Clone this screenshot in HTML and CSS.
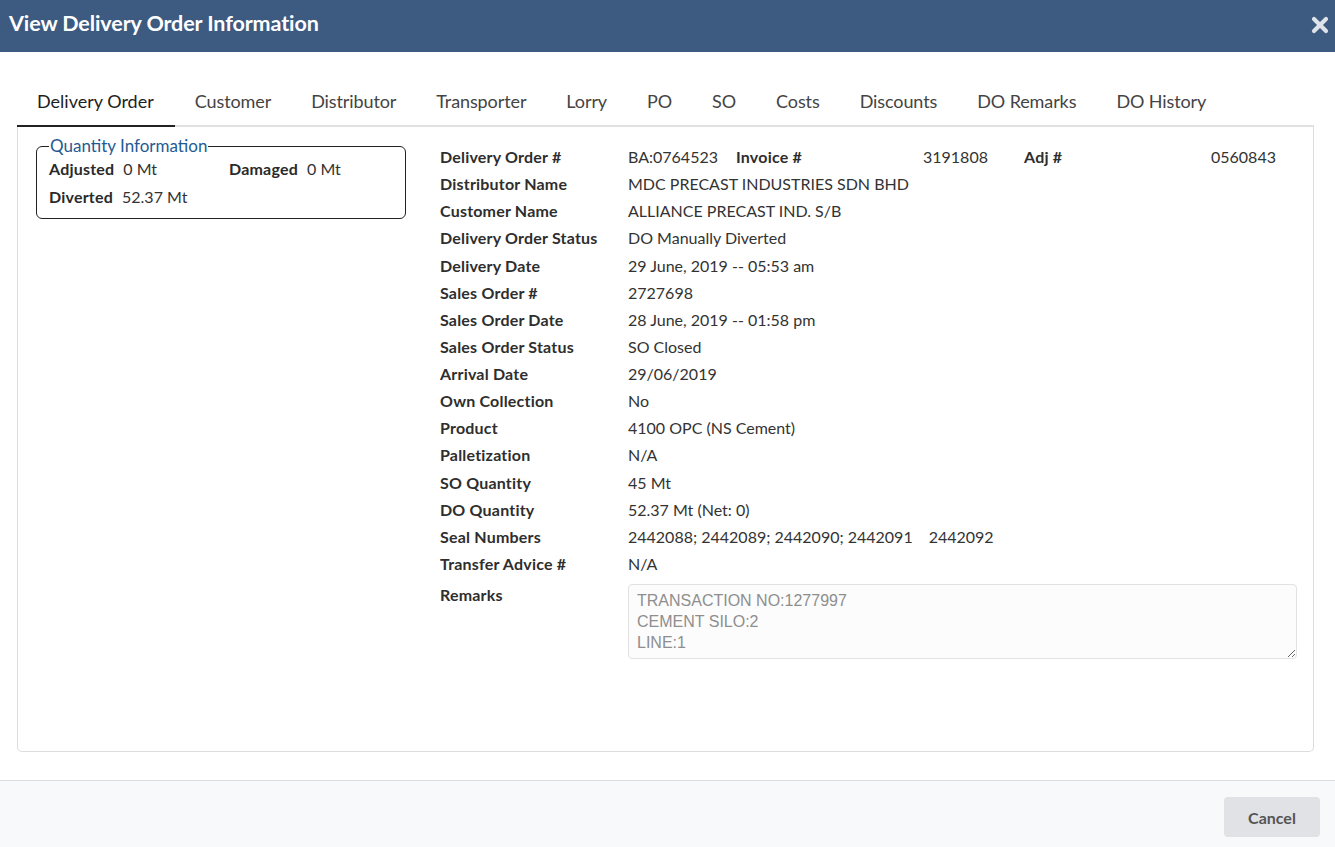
FILE: index.html
```html
<!DOCTYPE html>
<html>
<head>
<meta charset="utf-8">
<title>View Delivery Order Information</title>
<link rel="stylesheet" href="styles.css">
</head>
<body>
<div class="modal">
  <div class="modal-header">
    <h1 class="modal-title">View Delivery Order Information</h1>
    <span class="close" aria-label="Close">
      <svg width="18" height="18" viewBox="0 0 18 18"><path d="M3 3 L15 15 M15 3 L3 15" stroke="#dfe3ea" stroke-width="4.2" stroke-linecap="round"/></svg>
    </span>
  </div>
  <div class="modal-body">
    <ul class="tabs">
      <li class="tab active">Delivery Order</li>
      <li class="tab">Customer</li>
      <li class="tab">Distributor</li>
      <li class="tab">Transporter</li>
      <li class="tab">Lorry</li>
      <li class="tab">PO</li>
      <li class="tab">SO</li>
      <li class="tab">Costs</li>
      <li class="tab">Discounts</li>
      <li class="tab">DO Remarks</li>
      <li class="tab">DO History</li>
    </ul>
    <div class="panel">
      <div class="left-col">
        <fieldset class="qty">
          <legend>Quantity Information</legend>
          <div class="qty-grid">
            <div class="qty-item"><b>Adjusted</b> 0 Mt</div>
            <div class="qty-item"><b>Damaged</b> 0 Mt</div>
            <div class="qty-item"><b>Diverted</b> 52.37 Mt</div>
          </div>
        </fieldset>
      </div>
      <div class="details">
        <div class="row"><div class="lbl">Delivery Order #</div>
          <div class="val first">
            <span class="c1">BA:0764523</span><span class="c2 lbl">Invoice #</span><span class="c3">3191808</span><span class="c4 lbl">Adj #</span><span class="c5">0560843</span>
          </div></div>
        <div class="row"><div class="lbl">Distributor Name</div><div class="val">MDC PRECAST INDUSTRIES SDN BHD</div></div>
        <div class="row"><div class="lbl">Customer Name</div><div class="val">ALLIANCE PRECAST IND. S/B</div></div>
        <div class="row"><div class="lbl">Delivery Order Status</div><div class="val">DO Manually Diverted</div></div>
        <div class="row"><div class="lbl">Delivery Date</div><div class="val">29 June, 2019 -- 05:53 am</div></div>
        <div class="row"><div class="lbl">Sales Order #</div><div class="val">2727698</div></div>
        <div class="row"><div class="lbl">Sales Order Date</div><div class="val">28 June, 2019 -- 01:58 pm</div></div>
        <div class="row"><div class="lbl">Sales Order Status</div><div class="val">SO Closed</div></div>
        <div class="row"><div class="lbl">Arrival Date</div><div class="val">29/06/2019</div></div>
        <div class="row"><div class="lbl">Own Collection</div><div class="val">No</div></div>
        <div class="row"><div class="lbl">Product</div><div class="val">4100 OPC (NS Cement)</div></div>
        <div class="row"><div class="lbl">Palletization</div><div class="val">N/A</div></div>
        <div class="row"><div class="lbl">SO Quantity</div><div class="val">45 Mt</div></div>
        <div class="row"><div class="lbl">DO Quantity</div><div class="val">52.37 Mt (Net: 0)</div></div>
        <div class="row"><div class="lbl">Seal Numbers</div><div class="val">2442088; 2442089; 2442090; 2442091<span class="seal-last">2442092</span></div></div>
        <div class="row"><div class="lbl">Transfer Advice #</div><div class="val">N/A</div></div>
        <div class="row remarks-row"><div class="lbl">Remarks</div>
          <div class="val"><textarea class="remarks" readonly>TRANSACTION NO:1277997
CEMENT SILO:2
LINE:1</textarea></div></div>
      </div>
    </div>
  </div>
  <div class="modal-footer">
    <button class="btn-cancel">Cancel</button>
  </div>
</div>
</body>
</html>
```

FILE: styles.css
```css
html, body {
  margin: 0;
  padding: 0;
  background: #ffffff;
}
body {
  font-family: Lato, "Open Sans", Arial, sans-serif;
  color: #333;
  width: 1335px;
  height: 847px;
  overflow: hidden;
}
.modal {
  display: flex;
  flex-direction: column;
  height: 847px;
}
.modal-header {
  height: 52px;
  flex: none;
  background: #3d5a80;
  display: flex;
  align-items: center;
  justify-content: space-between;
  padding: 0 5px 0 9px;
  box-sizing: border-box;
}
.modal-title {
  margin: 0;
  font-size: 21.5px;
  font-weight: 700;
  color: #ffffff;
  letter-spacing: -0.1px;
  padding-bottom: 6px;
}
.close {
  display: flex;
  width: 20px;
  height: 20px;
  align-items: center;
  justify-content: center;
  margin-bottom: 3px;
}
.modal-body {
  padding: 27px 20px 0 17px;
  flex: none;
}
.tabs {
  list-style: none;
  margin: 0;
  padding: 0;
  display: flex;
  border-bottom: 2px solid #e1e1e1;
  width: 1297px;
}
.tab {
  padding: 10px 20px 11px;
  font-size: 18px;
  line-height: 25px;
  color: #444;
  margin-bottom: -2px;
  border-bottom: 2px solid transparent;
  letter-spacing: -0.1px;
}
.tab.active {
  color: #1e1e1e;
  border-bottom-color: #222;
  padding-right: 21px;
  letter-spacing: 0;
}
.panel {
  width: 1297px;
  height: 625px;
  box-sizing: border-box;
  border: 1px solid #dcdcdc;
  border-top: none;
  border-radius: 0 0 5px 5px;
  display: flex;
  padding: 9px 0 0 18px;
}
.left-col {
  width: 404px;
  flex: none;
}
.qty {
  margin: 0;
  width: 370px;
  height: 83px;
  box-sizing: border-box;
  border: 1px solid #222;
  border-radius: 6px;
  padding: 0 12px 0 12px;
}
.qty legend {
  color: #1f5b93;
  font-size: 17px;
  padding: 0 1px;
  margin-left: 0;
  line-height: 20px;
}
.qty-grid {
  display: grid;
  grid-template-columns: 180px 1fr;
  margin-top: -1px;
}
.qty-item {
  font-size: 16px;
  line-height: 28px;
  color: #333;
}
.qty-item b {
  color: #2a2a2a;
  letter-spacing: 0.2px;
  margin-right: 5px;
}
.details {
  flex: 1;
  padding-top: 7px;
  font-size: 16px;
}
.row {
  display: flex;
  line-height: 27.13px;
}
.lbl {
  font-weight: 700;
  color: #2e2e2e;
  letter-spacing: 0.2px;
}
.row > .lbl {
  width: 188px;
  flex: none;
}
.val {
  color: #333;
  flex: 1;
}
.first {
  display: flex;
}
.c1 { width: 108px; }
.c2 { width: 187px; }
.c3 { width: 101px; }
.c4 { width: 187px; }
.seal-last {
  margin-left: 16px;
}
.remarks-row {
  margin-top: 7px;
}
.remarks-row > .lbl {
  line-height: 22px;
}
.remarks {
  display: block;
  width: 669px;
  height: 75px;
  box-sizing: border-box;
  margin-top: 0;
  border: 1px solid #e2e2e2;
  border-radius: 4px;
  background: #fcfcfc;
  font-family: "Liberation Sans", Arial, sans-serif;
  font-size: 16px;
  line-height: 21px;
  color: #8e8e8e;
  padding: 5px 8px;
  resize: vertical;
  overflow: hidden;
}
.modal-footer {
  flex: 1;
  border-top: 1px solid #dcdcdc;
  background: #f8f9fb;
  display: flex;
  justify-content: flex-end;
  align-items: flex-start;
  padding: 16px 15px 0 0;
  margin-top: 28px;
}
.btn-cancel {
  width: 96px;
  height: 40px;
  border: none;
  border-radius: 4px;
  background: #e1e2e5;
  color: #555;
  font-family: Lato, Arial, sans-serif;
  font-size: 16px;
  font-weight: 700;
}
```
